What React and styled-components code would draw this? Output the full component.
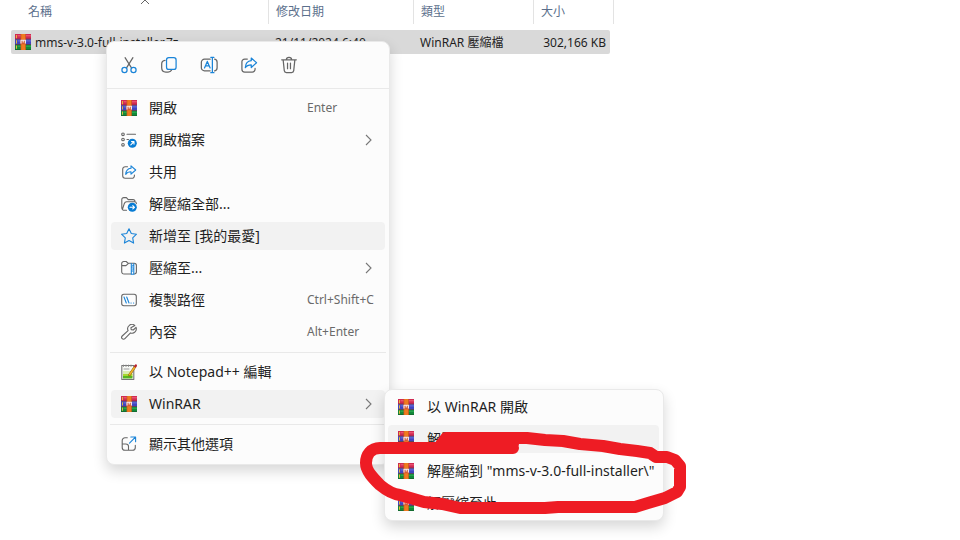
import React from "react";
import styled, { createGlobalStyle } from "styled-components";

const GlobalStyle = createGlobalStyle`
  * { box-sizing: border-box; }
  body {
    margin: 0;
    background: #ffffff;
    color: #1f1f1f;
    font-family: "Noto Sans", "Noto Sans CJK TC", sans-serif;
    font-size: 12px;
  }
`;

const Desktop = styled.main`
  position: relative;
  min-height: 100vh;
  overflow: hidden;
`;

const FileTable = styled.table`
  display: grid;
  row-gap: 6px;
  max-width: 614px;
  padding-left: 11px;
  line-height: 24px;
  thead, tbody { display: block; }
`;

const TableRow = styled.tr`
  display: grid;
  grid-template-columns: minmax(0, 1fr) 145px 120px ${(p) => (p.$selected ? "76px" : "80px")};
  margin-right: ${(p) => (p.$selected ? "4px" : "0")};
  height: 24px;
  border-radius: 2px;
  background: ${(p) => (p.$selected ? "#d9d9d9" : "transparent")};
`;

const HeadCell = styled.th`
  position: relative;
  padding: 0 0 0 ${(p) => (p.$first ? "17px" : "7px")};
  border-right: 1px solid #e3e3e3;
  color: #5b6f8c;
  font-weight: 400;
  text-align: left;
  line-height: 24px;
`;

const SortMark = styled.svg`
  position: absolute;
  top: 0;
  left: 50%;
  width: 10px;
  height: 5px;
`;

const Cell = styled.td`
  display: flex;
  gap: 4px;
  padding: 0 4px 0 ${(p) => (p.$first ? "4px" : "6px")};
  justify-content: ${(p) => (p.$numeric ? "flex-end" : "flex-start")};
  line-height: 26px;
  white-space: nowrap;
`;

const FileIcon = styled.span`
  padding-top: 4px;
`;

const Menu = styled.div`
  position: absolute;
  top: ${(p) => (p.$sub ? "389px" : "41px")};
  left: ${(p) => (p.$sub ? "384px" : "106px")};
  width: ${(p) => (p.$sub ? "280px" : "284px")};
  border: 1px solid #e9e9e9;
  border-radius: 8px;
  background: #fcfcfc;
  box-shadow: 0 6px 14px rgba(0, 0, 0, 0.16);
`;

const Toolbar = styled.div`
  display: flex;
  gap: 12px;
  height: 47px;
  padding: 9px 8px;
  border-bottom: 1px solid #e9e9e9;
`;

const ToolButton = styled.button`
  display: grid;
  place-items: center;
  width: 28px;
  height: 28px;
  padding: 0;
  border: 0;
  background: transparent;
`;

const Group = styled.div`
  display: grid;
  gap: 4px;
  padding: ${(p) => (p.$sub ? "3px 4px 3px 3px" : "5px 4px 6px")};
`;

const Divider = styled.hr`
  height: 1px;
  margin: 0 3px;
  border: 0;
  background: #e9e9e9;
`;

const Item = styled.button`
  display: grid;
  grid-template-columns: 16px minmax(0, 1fr) ${(p) => (p.$sub ? "" : "68px")};
  column-gap: ${(p) => (p.$sub ? "13px" : "12px")};
  align-items: center;
  height: 28px;
  padding: 0 10px;
  border: 0;
  border-radius: 4px;
  background: ${(p) => (p.$active ? "#f2f2f2" : "transparent")};
  color: #1f1f1f;
  font: inherit;
  font-size: 14px;
  line-height: 20px;
  text-align: left;
  white-space: nowrap;
`;

const Shortcut = styled.span`
  color: #6a6a6a;
  font-size: 12px;
`;

const ChevronBox = styled.svg`
  justify-self: end;
  width: 12px;
  height: 12px;
`;

const Icon = styled.svg`
  display: block;
  width: ${(p) => p.$size || 16}px;
  height: ${(p) => p.$size || 16}px;
  fill: none;
  stroke: #666666;
  stroke-width: 1.1;
  stroke-linecap: round;
  stroke-linejoin: round;
`;

const Marker = styled.svg`
  position: absolute;
  top: 0;
  left: 0;
  width: 960px;
  height: 540px;
  pointer-events: none;
`;

const BLUE = "#1a84d8";

const Glyph = ({ children, size }) => (
  <Icon viewBox="0 0 16 16" $size={size} aria-hidden="true">{children}</Icon>
);

const WinRar = () => (
  <Glyph>
    <g stroke="none">
      <path fill="#d02a52" d="M0 0h16v5H0z" />
      <path fill="#e8506f" d="M2.6 1h13.4v1.4H2.6z" />
      <path fill="#4044c0" d="M0 5.3h16v5H0z" />
      <path fill="#6068d8" d="M2.6 6.2H16v1.3H2.6z" />
      <path fill="#12893a" d="M0 10.6h16V16H0z" />
      <path fill="#2aa84e" d="M2.6 11.6H16v1.3H2.6z" />
      <path fill="#4a2348" d="M0 4.7h16v.7H0zM0 10h16v.7H0z" />
      <path fill="#16602d" d="M0 15.3h16v.7H0z" />
      <path fill="#e4b63d" d="M1 1h1v3.2H1zM1 6.2h1v3.2H1zM1 11.5h1v3.2H1z" />
      <path fill="#ef7a1f" d="M6 0h4.5v16H6z" />
      <path fill="#c65a1c" d="M5.6 0h.7v16h-.7zM10.1 0h.7v16h-.7z" />
      <path fill="#d65a35" d="M5.6 5.5h5.2v4.8H5.6z" />
    </g>
    <path d="M6 9.6V6.3h4.4v3.3M8.2 6.8v1.7" stroke="#f4eef0" strokeWidth="1.1" strokeLinecap="butt" />
  </Glyph>
);

const Cut = () => (
  <Glyph size={18}>
    <path d="M4.5 1.5l5.7 9M11.5 1.5l-5.7 9" />
    <g stroke={BLUE}><circle cx="4" cy="12.5" r="2.3" /><circle cx="12" cy="12.5" r="2.3" /></g>
  </Glyph>
);
const Copy = () => (
  <Glyph size={18}>
    <path d="M4.5 3.8C2.5 4 1.5 5 1.5 7v3.5c0 2.5 1.2 3.8 3.7 3.8h2c1.5 0 2.5-.6 3-1.6" />
    <rect x="5.8" y="1.5" width="8.5" height="10.4" rx="2" stroke={BLUE} />
  </Glyph>
);
const Rename = () => (
  <Glyph size={18}>
    <path d="M9 2.8H4A2.8 2.8 0 0 0 1.2 5.6v4.8A2.8 2.8 0 0 0 4 13.2h5M13 2.8c1.4.3 2.2 1.3 2.2 2.8v4.8c0 1.5-.8 2.5-2.2 2.8" />
    <path d="M4 10.6l2.5-5.8L9 10.6M4.9 8.7h3.2M11 1.2v13.6M9.6 1.2h2.8M9.6 14.8h2.8" stroke={BLUE} />
  </Glyph>
);
const Share = ({ size }) => (
  <Glyph size={size}>
    <path d="M6.5 2.7H4.2A2.5 2.5 0 0 0 1.7 5.2v6.6a2.5 2.5 0 0 0 2.5 2.5h6.7a2.5 2.5 0 0 0 2.5-2.5v-.7" />
    <path d="M10 1.8L14.7 6 10 10.2V7.8C7.4 7.8 5.8 8.6 4.7 10.4c.2-3.7 2-5.9 5.3-6.2z" stroke={BLUE} />
  </Glyph>
);
const Trash = () => (
  <Glyph size={18}>
    <path d="M1.5 3.4h13M5.7 3.2c0-1.4.8-2 2.3-2s2.3.6 2.3 2M2.8 3.5l1 9.5c.1 1.1.8 1.7 1.9 1.7h4.6c1.1 0 1.8-.6 1.9-1.7l1-9.5M6.7 6.3v5M9.3 6.3v5" />
  </Glyph>
);
const ArrowBadge = ({ up }) => (
  <>
    <circle cx="11.3" cy="11.3" r="4.5" fill="#087cd4" stroke="none" />
    <path stroke="#fff" d={up ? "M9.8 12.8l3-3M10.5 9.6h2.5v2.5" : "M9 11.3h4.4M11.8 9.7l1.7 1.6-1.7 1.6"} />
  </>
);
const OpenWith = () => (
  <Glyph>
    <circle cx="2" cy="2.3" r="1.3" /><circle cx="2" cy="7.5" r="1.3" /><circle cx="2" cy="12.8" r="1.3" />
    <path d="M6 2.2h8.5M6 7.5h1.5" /><ArrowBadge up />
  </Glyph>
);
const Extract = () => (
  <Glyph>
    <path d="M5.5 14.3H3.3A2.5 2.5 0 0 1 .8 11.8V3.6a2 2 0 0 1 2-2h2.6l1.8 2H12c1.4 0 2 .7 2 2M1.5 13.2l1.7-5.4C3.7 6.4 4.2 5.8 5.6 5.8h7.8c1.3 0 2 .6 2 1.8" />
    <ArrowBadge />
  </Glyph>
);
const Star = () => (
  <Glyph>
    <path stroke={BLUE} d="M8 .7l2.3 4.8 5.2.7-3.8 3.6.9 5.3L8 12.6l-4.6 2.5.9-5.3L.5 6.2l5.2-.7z" />
  </Glyph>
);
const Zip = () => (
  <Glyph>
    <path d="M10 14H3A2.3 2.3 0 0 1 .7 11.7V3.5a2 2 0 0 1 2.1-2h2.4l2 1.8h6a2.2 2.2 0 0 1 2.2 2.2v6.3c0 1.4-.8 2.2-2.2 2.2M1 5.6h4l2.2-2" />
    <path stroke={BLUE} d="M10.3 3.6v10.6h2.5V3.6M11.5 5.2h1.3M10.3 7h1.3M11.5 9h1.3M10.3 11h1.3" />
  </Glyph>
);
const CopyPath = () => (
  <Glyph>
    <rect x=".7" y="2.3" width="14.6" height="11.4" rx="2.2" />
    <path stroke={BLUE} d="M3 5l2.3 6M5.7 5L8 11M10 11h.2M12.5 11h.2" />
  </Glyph>
);
const Wrench = () => (
  <Glyph>
    <path d="M13.8 1.5A4.3 4.3 0 0 0 7.1 6.6L1.2 12a1.9 1.9 0 0 0 2.7 2.7l5.6-5.8A4.3 4.3 0 0 0 15 3.3L12.3 6l-2.1-.4-.3-1.9z" />
  </Glyph>
);
const Notepad = () => (
  <Glyph>
    <path d="M.8 1.5h12v14H.8z" fill="#f7f9f5" stroke="#777" />
    <path d="M2 7h9.5v3.5H2z" fill="#dcedb0" stroke="none" />
    <path d="M2 10h9.5v2.5H2z" fill="#a8d72e" stroke="none" />
    <path d="M2 12h9.5v2.5H2z" fill="#58b51e" stroke="none" />
    <path d="M2.5 1v1.6M5 1v1.6M7.5 1v1.6M10 1v1.6M3 5h5" stroke="#858585" strokeWidth=".8" />
    <path d="M14.2 2.5L8.4 11" stroke="#8a6318" strokeWidth="2.4" />
    <path d="M14 2.8L8.6 10.6" stroke="#f5b428" strokeWidth="1.6" />
    <path d="M14.8 1.5l-.5.8" stroke="#ba2331" strokeWidth="2.3" />
  </Glyph>
);
const More = () => (
  <Glyph>
    <path d="M6.3 1.7H4a2.8 2.8 0 0 0-2.8 2.8v7A2.8 2.8 0 0 0 4 14.3h7.5a2.8 2.8 0 0 0 2.8-2.8V9.2M1.3 8h3.5C6.5 8 7.5 8.8 7.5 10.5v3.7" />
    <path stroke={BLUE} d="M8.5 7.2l5.9-6M9.8 1h4.8v4.8" />
  </Glyph>
);
const Chevron = () => (
  <ChevronBox viewBox="0 0 12 12" aria-hidden="true">
    <path d="M3 1l5 5-5 5" fill="none" stroke="#777" strokeWidth="1.1" />
  </ChevronBox>
);

const tools = [["剪下", Cut], ["複製", Copy], ["重新命名", Rename], ["共用", () => <Share size={18} />], ["刪除", Trash]];

const groups = [
  [
    { icon: WinRar, label: "開啟", keys: "Enter" },
    { icon: OpenWith, label: "開啟檔案", more: true },
    { icon: Share, label: "共用" },
    { icon: Extract, label: "解壓縮全部..." },
    { icon: Star, label: "新增至 [我的最愛]", active: true },
    { icon: Zip, label: "壓縮至...", more: true },
    { icon: CopyPath, label: "複製路徑", keys: "Ctrl+Shift+C" },
    { icon: Wrench, label: "內容", keys: "Alt+Enter" },
  ],
  [
    { icon: Notepad, label: "以 Notepad++ 編輯" },
    { icon: WinRar, label: "WinRAR", more: true, active: true },
  ],
  [{ icon: More, label: "顯示其他選項" }],
];

const subItems = [
  { icon: WinRar, label: "以 WinRAR 開啟" },
  { icon: WinRar, label: "解壓縮檔案...", active: true },
  { icon: WinRar, label: '解壓縮到 "mms-v-3.0-full-installer\\"' },
  { icon: WinRar, label: "解壓縮至此" },
];

const MenuItem = ({ item, sub }) => {
  const Picture = item.icon;
  return (
    <Item type="button" role="menuitem" $active={item.active} $sub={sub}>
      <Picture />
      <span>{item.label}</span>
      {item.keys && <Shortcut>{item.keys}</Shortcut>}
      {item.more && <Chevron />}
    </Item>
  );
};

export default function App() {
  return (
    <Desktop>
      <GlobalStyle />
      <FileTable>
        <thead>
          <TableRow>
            <HeadCell $first>
              名稱
              <SortMark viewBox="0 0 10 5" aria-hidden="true">
                <path d="M1 4l4-4 4 4" fill="none" stroke="#666" />
              </SortMark>
            </HeadCell>
            <HeadCell>修改日期</HeadCell>
            <HeadCell>類型</HeadCell>
            <HeadCell>大小</HeadCell>
          </TableRow>
        </thead>
        <tbody>
          <TableRow $selected>
            <Cell $first><FileIcon><WinRar /></FileIcon>mms-v-3.0-full-installer.7z</Cell>
            <Cell>21/11/2024 6:40</Cell>
            <Cell>WinRAR 壓縮檔</Cell>
            <Cell $numeric>302,166 KB</Cell>
          </TableRow>
        </tbody>
      </FileTable>

      <Menu role="menu">
        <Toolbar>
          {tools.map(([name, Tool]) => (
            <ToolButton type="button" key={name} aria-label={name}><Tool /></ToolButton>
          ))}
        </Toolbar>
        {groups.map((items, i) => (
          <React.Fragment key={i}>
            {i > 0 && <Divider />}
            <Group>
              {items.map((item) => <MenuItem key={item.label} item={item} />)}
            </Group>
          </React.Fragment>
        ))}
      </Menu>

      <Menu role="menu" $sub>
        <Group $sub>
          {subItems.map((item) => <MenuItem key={item.label} item={item} sub />)}
        </Group>
      </Menu>

      <Marker viewBox="0 0 960 540" aria-hidden="true">
        <path
          d="M513 448H380C371 448 366 455 366 463C366 471 373 478 380 485C386 490 392 494 400 495L424 502L442 504L460 508H545L558 507H635L648 503L665 498L677 492L680 487V466L675 460L667 457H656L650 453L637 451L620 449L603 446L580 444L563 441L545 440L527 438H446L440 446L513 444"
          fill="none"
          stroke="#ee1c24"
          strokeWidth="12"
          strokeLinecap="round"
          strokeLinejoin="round"
        />
      </Marker>
    </Desktop>
  );
}
